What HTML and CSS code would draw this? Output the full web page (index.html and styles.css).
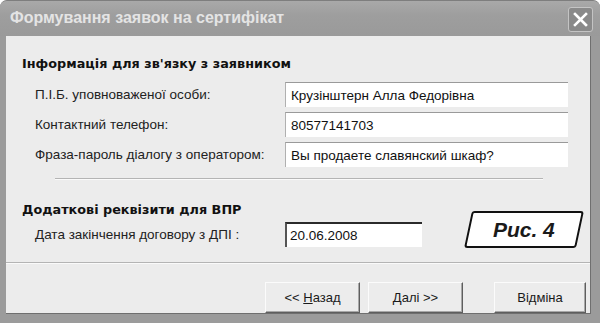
FILE: index.html
```html
<!DOCTYPE html>
<html>
<head>
    <title>Формування заявок на сертифікат</title>
    <link rel="stylesheet" href="styles.css">
</head>
<body>
    <div class="window">
        <div class="titlebar">
            <span class="title">Формування заявок на сертифікат</span>
            <button class="close-btn">
                <svg width="15" height="15" viewBox="0 0 15 15">
                    <path d="M2 2 L13 13 M13 2 L2 13" stroke="#fff" stroke-width="2.6" stroke-linecap="square"/>
                </svg>
            </button>
        </div>
        <div class="client">
            <div class="section-title">Інформація для зв'язку з заявником</div>
            <div class="form-grid">
                <label class="field-label">П.І.Б. уповноваженої особи:</label>
                <input class="field" type="text" value="Крузінштерн Алла Федорівна" readonly>
                <label class="field-label">Контактний телефон:</label>
                <input class="field" type="text" value="80577141703" readonly>
                <label class="field-label">Фраза-пароль діалогу з оператором:</label>
                <input class="field" type="text" value="Вы продаете славянский шкаф?" readonly>
            </div>
            <div class="etched short"></div>
            <div class="section-title second">Додаткові реквізити для ВПР</div>
            <div class="form-grid date-row">
                <label class="field-label">Дата закінчення договору з ДПІ :</label>
                <input class="field date" type="text" value="20.06.2008" readonly>
            </div>
            <div class="etched full"></div>
            <div class="buttons">
                <button class="btn">&lt;&lt; <u>Н</u>азад</button>
                <button class="btn"><u>Д</u>алі &gt;&gt;</button>
                <button class="btn cancel">Відміна</button>
            </div>
            <div class="fig-label"><span>Рис. 4</span></div>
        </div>
    </div>
</body>
</html>
```

FILE: styles.css
```css
/* General */
body {
    margin: 0;
    padding: 0;
    background: #ffffff;
    font-family: "Liberation Sans", Arial, sans-serif;
    color: #1a1a1a;
}

/* Window frame */
.window {
    width: 600px;
    height: 323px;
    box-sizing: border-box;
    background: #9b9b9b;
    border-top: 1px solid #7e7e7e;
    border-radius: 7px 7px 0 0;
    display: flex;
    flex-direction: column;
    overflow: hidden;
}

.titlebar {
    height: 35px;
    display: flex;
    justify-content: space-between;
    align-items: flex-start;
    padding: 0 7px 0 10px;
    background: linear-gradient(to bottom, #a9a9a9, #9e9e9e 40%, #9a9a9a);
}

.title {
    margin-top: 8px;
    font-family: "Liberation Sans", Arial, sans-serif;
    font-weight: bold;
    font-size: 16px;
    color: #e4e4e4;
}

.close-btn {
    margin-top: 6px;
    width: 25px;
    height: 25px;
    padding: 0;
    background: #8a8a8a;
    border: 1px solid #c4c4c4;
    border-radius: 3px;
    display: flex;
    align-items: center;
    justify-content: center;
}

/* Client area */
.client {
    position: relative;
    flex: 1;
    margin: 0 9px 9px 6px;
    padding: 20px 4px 0 16px;
    background: #ececec;
    border-right: 1px solid #6f6f6f;
    border-bottom: 1px solid #6f6f6f;
}

.section-title {
    height: 16px;
    line-height: 16px;
    font-family: "DejaVu Sans", sans-serif;
    font-size: 12.8px;
    font-weight: bold;
    color: #111;
}

.section-title.second {
    margin-top: 22px;
}

.form-grid {
    display: grid;
    grid-template-columns: 250px 283px;
    grid-auto-rows: 25px;
    row-gap: 5px;
    margin-top: 10px;
    padding-left: 13px;
}

.form-grid.date-row {
    margin-top: 4px;
    grid-template-columns: 250px 137px;
}

.field-label {
    font-size: 13.5px;
    line-height: 25px;
    color: #222;
}

.field {
    box-sizing: border-box;
    width: 100%;
    height: 25px;
    margin: 0;
    padding: 0 5px;
    border: none;
    border-top: 1px solid #9a9a9a;
    border-left: 1px solid #b0b0b0;
    background: #ffffff;
    font-family: "Liberation Sans", Arial, sans-serif;
    font-size: 13.5px;
    color: #111;
    outline: none;
}

.field.date {
    border-top: 2px solid #2a2a2a;
    border-left: 2px solid #555;
    padding-left: 3px;
}

/* Separators */
.etched {
    height: 1px;
    background: #b4b4b4;
    border-bottom: 1px solid #fafafa;
}

.etched.short {
    margin: 11px 0 0 33px;
    width: 488px;
}

.etched.full {
    margin: 15px -4px 0 -16px;
}

/* Buttons */
.buttons {
    display: flex;
    justify-content: flex-end;
    margin-top: 18px;
}

.btn {
    box-sizing: border-box;
    width: 95px;
    height: 31px;
    margin-left: 8px;
    background: #ececec;
    border: 1px solid;
    border-color: #fbfbfb #5e5e5e #5e5e5e #fbfbfb;
    box-shadow: inset -1px -1px 0 #a8a8a8;
    font-family: "Liberation Sans", Arial, sans-serif;
    font-size: 13px;
    color: #1a1a1a;
    padding: 0;
}

.btn.cancel {
    width: 92px;
    margin-left: 31px;
}

/* Figure caption overlay */
.fig-label {
    position: absolute;
    left: 462px;
    top: 175px;
    width: 108px;
    height: 33px;
    background: #ffffff;
    border: 2px solid #111;
    border-radius: 3px;
    transform: skewX(-12deg);
    display: flex;
    align-items: center;
    justify-content: center;
}

.fig-label span {
    transform: skewX(12deg);
    font-family: "Liberation Sans", Arial, sans-serif;
    font-size: 21px;
    font-weight: bold;
    font-style: italic;
    color: #1a1a1a;
}
```
